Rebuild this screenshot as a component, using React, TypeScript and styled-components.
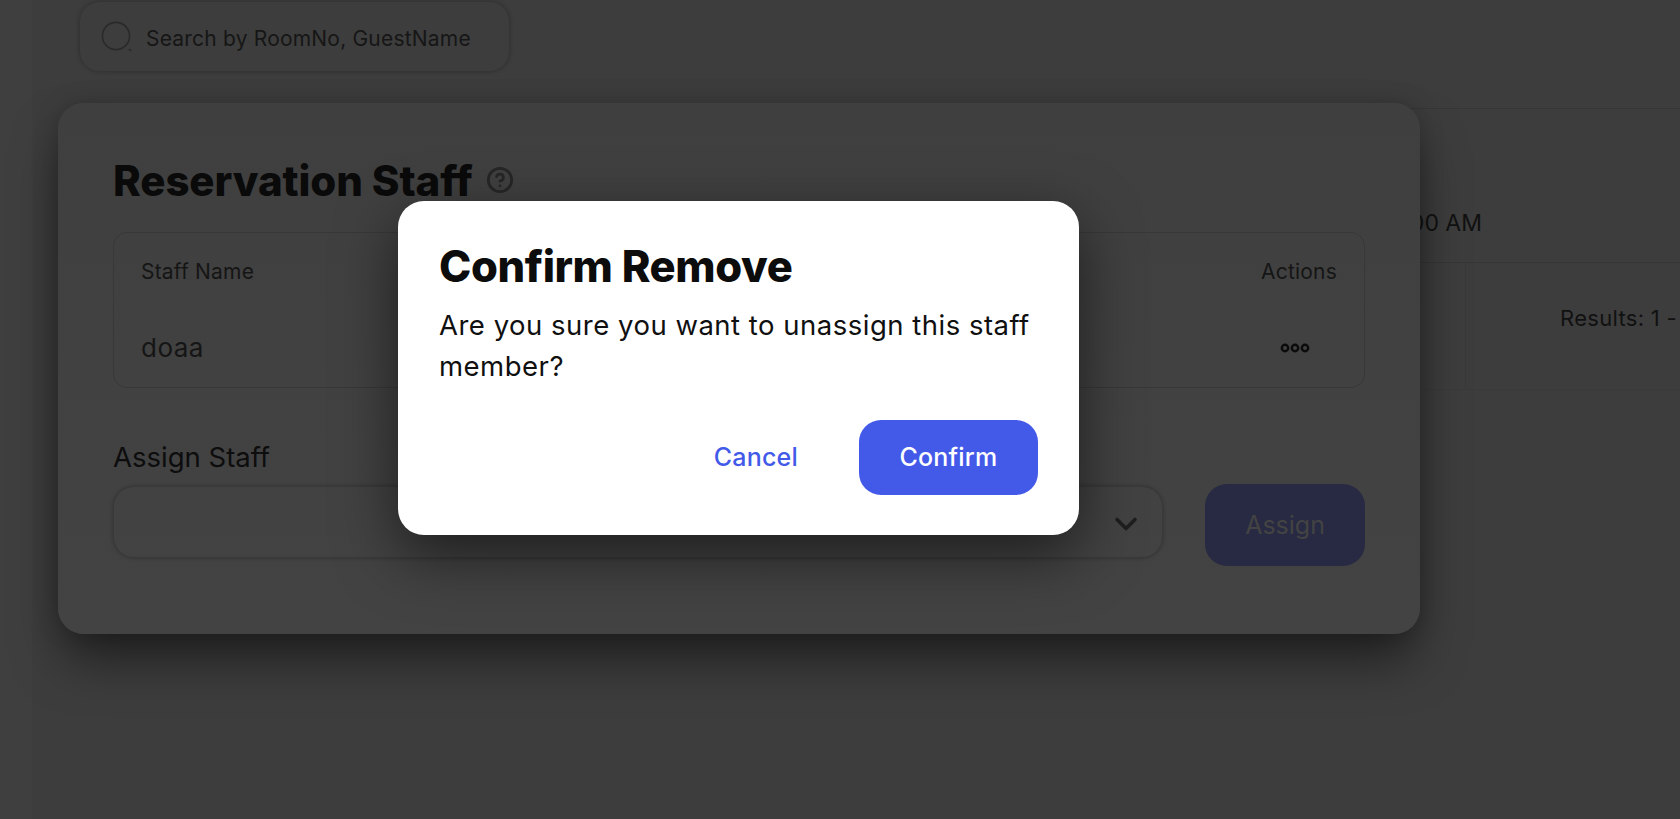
import { ChevronDown, CircleHelp } from 'lucide-react';
import React from 'react';
import styled, { createGlobalStyle } from 'styled-components';

const GlobalStyle = createGlobalStyle`
  html, body {
    margin: 0;
    height: 100%;
    background: #3d3d3d;
  }

  * {
    box-sizing: border-box;
  }

  body {
    font-family: Inter, "Noto Sans", "Liberation Sans", sans-serif;
    color: #0b0b0b;
  }
`;

const Page = styled.div`
  position: relative;
  display: flex;
  width: 1680px;
  height: 819px;
  overflow: hidden;
  background: #3d3d3d;
`;

const Sidebar = styled.div`
  flex: 0 0 32px;
  background: #3f3f3f;
`;

const Main = styled.main`
  flex: 1;
  min-width: 0;
  display: flex;
  flex-direction: column;
`;

const SearchBar = styled.div`
  display: flex;
  align-items: center;
  gap: 13px;
  width: 429px;
  height: 69px;
  margin: 2px 0 0 48px;
  padding: 3px 0 0 21px;
  border-radius: 20px;
  box-shadow: 0 0 3px 2px #353535;
  font-size: 21px;
  letter-spacing: 0.2px;
  color: #161616;
  white-space: nowrap;
`;

const SearchIcon = styled.svg`
  margin-top: -2px;
`;

const BackTable = styled.div`
  margin: 37px 0 0 1000px;
  border-top: 1px solid #363636;
`;

const BackRow = styled.div<{ $height: number }>`
  display: flex;
  height: ${(p) => p.$height}px;
  border-bottom: 1px solid ${(p) => (p.$height === 154 ? '#363636' : '#3a3a3a')};
`;

const TimeCell = styled.div`
  width: 450px;
  padding-top: 100px;
  text-align: right;
  font-size: 23px;
  color: #111;
`;

const ResultsLabel = styled.div`
  flex: 0 0 434px;
  border-right: 1px solid #393939;
`;

const ResultsText = styled.div`
  padding: 42px 0 0 94px;
  font-size: 22px;
  letter-spacing: 0.3px;
  color: #111;
  white-space: nowrap;
`;

const StaffCard = styled.section`
  position: absolute;
  left: 58px;
  top: 103px;
  width: 1362px;
  height: 531px;
  padding: 50px 55px 0;
  border-radius: 26px;
  background: linear-gradient(#3f3f3f, #434343);
  box-shadow: 0 30px 50px -6px rgba(0, 0, 0, 0.5), 0 0 24px rgba(0, 0, 0, 0.18);
`;

const CardHeading = styled.div`
  display: flex;
  align-items: center;
  gap: 13px;
  height: 54px;
  color: #262626;
`;

const CardTitle = styled.h2`
  margin: 0;
  font-size: 42px;
  font-weight: 800;
  letter-spacing: -0.1px;
  color: #0a0a0a;
`;

const StaffTable = styled.div`
  display: flex;
  flex-direction: column;
  height: 156px;
  margin-top: 25px;
  padding: 0 27px;
  border: 1px solid #383838;
  border-radius: 14px;
`;

const StaffRow = styled.div<{ $height: number }>`
  display: flex;
  align-items: center;
  justify-content: space-between;
  height: ${(p) => p.$height}px;
`;

const HeaderText = styled.span`
  font-size: 21px;
  letter-spacing: 0.2px;
  color: #151515;
`;

const NameText = styled.span`
  font-size: 26px;
  letter-spacing: 0.5px;
  color: #151515;
`;

const Dots = styled.svg`
  margin: 2px 27px 0 0;
`;

const AssignLabel = styled.div`
  margin-top: 47px;
  font-size: 27.5px;
  line-height: 44px;
  color: #0d0d0d;
`;

const AssignRow = styled.div`
  display: flex;
  align-items: flex-start;
  gap: 43px;
  margin-top: 5px;
`;

const SelectBox = styled.div`
  display: flex;
  align-items: center;
  justify-content: flex-end;
  width: 1049px;
  height: 70px;
  margin: 3px 0 0 1px;
  padding: 4px 18px 0 0;
  border-radius: 20px;
  box-shadow: 0 0 3px 2px #383838;
  color: #1e1e1e;
`;

const AssignButton = styled.button`
  width: 160px;
  height: 82px;
  border: 0;
  border-radius: 22px;
  background: #272a42;
  color: #434343;
  font: inherit;
  font-size: 25px;
`;

const ConfirmDialog = styled.div`
  position: absolute;
  left: 398px;
  top: 201px;
  display: flex;
  flex-direction: column;
  width: 681px;
  height: 334px;
  padding: 38px 41px 0;
  border-radius: 26px;
  background: #fff;
  box-shadow: 0 20px 60px rgba(0, 0, 0, 0.55);
`;

const DialogTitle = styled.h3`
  margin: 0;
  font-size: 43.5px;
  font-weight: 800;
  line-height: 54px;
  letter-spacing: -0.4px;
  color: #0c0c0c;
`;

const DialogText = styled.p`
  margin: 12px 0 0;
  font-size: 27.5px;
  line-height: 41px;
  letter-spacing: 0.5px;
  color: #101010;
`;

const DialogActions = styled.div`
  display: flex;
  align-items: center;
  justify-content: flex-end;
  gap: 61px;
  margin-top: 33px;
`;

const DialogButton = styled.button<{ $primary?: boolean }>`
  height: 75px;
  padding: 0 0 2px;
  border: 0;
  border-radius: 22px;
  width: ${(p) => (p.$primary ? '179px' : 'auto')};
  background: ${(p) => (p.$primary ? '#435ae9' : 'transparent')};
  color: ${(p) => (p.$primary ? '#fff' : '#435ae9')};
  font: inherit;
  font-size: 25px;
  font-weight: 500;
  letter-spacing: 0.2px;
`;

export default function App (): React.ReactElement {
  return (
    <>
      <GlobalStyle />
      <Page>
        <Sidebar />
        <Main>
          <SearchBar>
            <SearchIcon fill='none' height='32' stroke='#2a2a2a' strokeWidth='1.6' viewBox='0 0 32 32' width='32'>
              <circle cx='15' cy='15' r='13.6' />
              <path d='M28 28l2 2' />
            </SearchIcon>
            Search by RoomNo, GuestName
          </SearchBar>
          <BackTable>
            <BackRow $height={154}>
              <TimeCell>10:00 AM</TimeCell>
            </BackRow>
            <BackRow $height={127}>
              <ResultsLabel />
              <ResultsText>Results: 1 -</ResultsText>
            </BackRow>
          </BackTable>
        </Main>

        <StaffCard>
          <CardHeading>
            <CardTitle>Reservation Staff</CardTitle>
            <CircleHelp size={28} strokeWidth={2.4} />
          </CardHeading>
          <StaffTable>
            <StaffRow $height={76}>
              <HeaderText>Staff Name</HeaderText>
              <HeaderText>Actions</HeaderText>
            </StaffRow>
            <StaffRow $height={76}>
              <NameText>doaa</NameText>
              <Dots fill='none' height='10' stroke='#0b0b0b' strokeWidth='2.4' viewBox='0 0 30 10' width='30'>
                <circle cx='5' cy='5' r='3.2' />
                <circle cx='15' cy='5' r='3.2' />
                <circle cx='25' cy='5' r='3.2' />
              </Dots>
            </StaffRow>
          </StaffTable>
          <AssignLabel>Assign Staff</AssignLabel>
          <AssignRow>
            <SelectBox>
              <ChevronDown size={36} strokeWidth={2.4} />
            </SelectBox>
            <AssignButton>Assign</AssignButton>
          </AssignRow>
        </StaffCard>

        <ConfirmDialog>
          <DialogTitle>Confirm Remove</DialogTitle>
          <DialogText>Are you sure you want to unassign this staff member?</DialogText>
          <DialogActions>
            <DialogButton>Cancel</DialogButton>
            <DialogButton $primary>Confirm</DialogButton>
          </DialogActions>
        </ConfirmDialog>
      </Page>
    </>
  );
}
